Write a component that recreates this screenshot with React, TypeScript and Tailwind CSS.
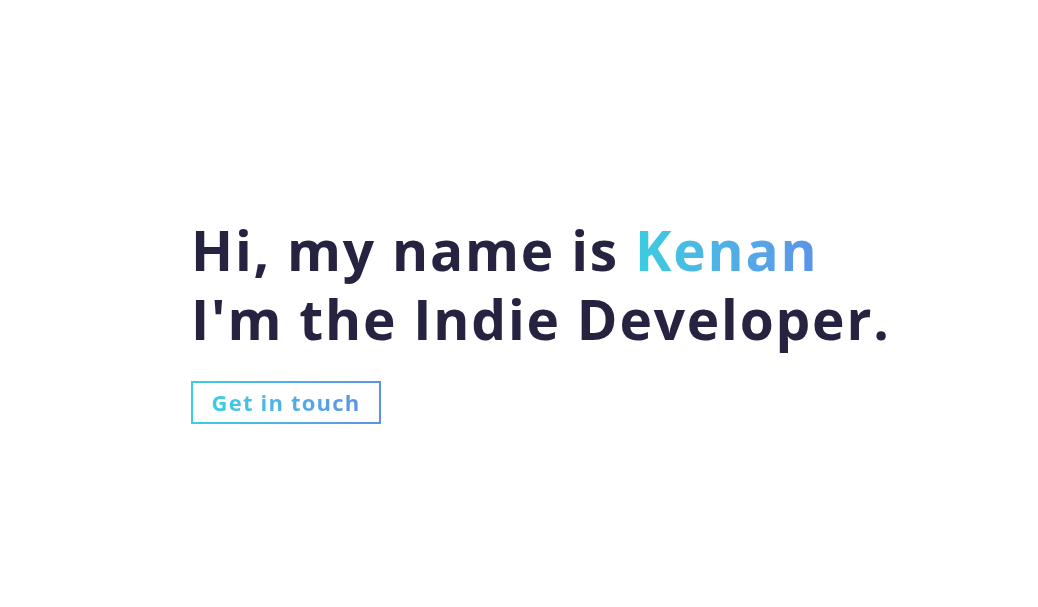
export default function App() {
  return (
    <div className="min-h-screen w-full bg-white font-['Open_Sans','Liberation_Sans',sans-serif]">
      <section className="pl-[191px] pt-[215px]">
        <h1 className="text-[55px] font-bold leading-[69px] text-[#262340] tracking-[1.8px]">
          Hi, my name is{' '}
          <span className="bg-gradient-to-r from-[#3acde0] to-[#5c92e9] bg-clip-text text-transparent">
            Kenan
          </span>
          <br />
          I'm the Indie Developer.
        </h1>
        <div className="mt-[28px]">
          <a
            href="#contact"
            className="inline-block bg-gradient-to-r from-[#3acde0] to-[#5c92e9] p-[2px]"
          >
            <span className="flex h-[39px] w-[186px] items-center justify-center bg-white">
              <span className="bg-gradient-to-r from-[#3acde0] to-[#5c92e9] bg-clip-text text-[22px] font-bold tracking-[1.2px] text-transparent">
                Get in touch
              </span>
            </span>
          </a>
        </div>
      </section>
    </div>
  )
}
